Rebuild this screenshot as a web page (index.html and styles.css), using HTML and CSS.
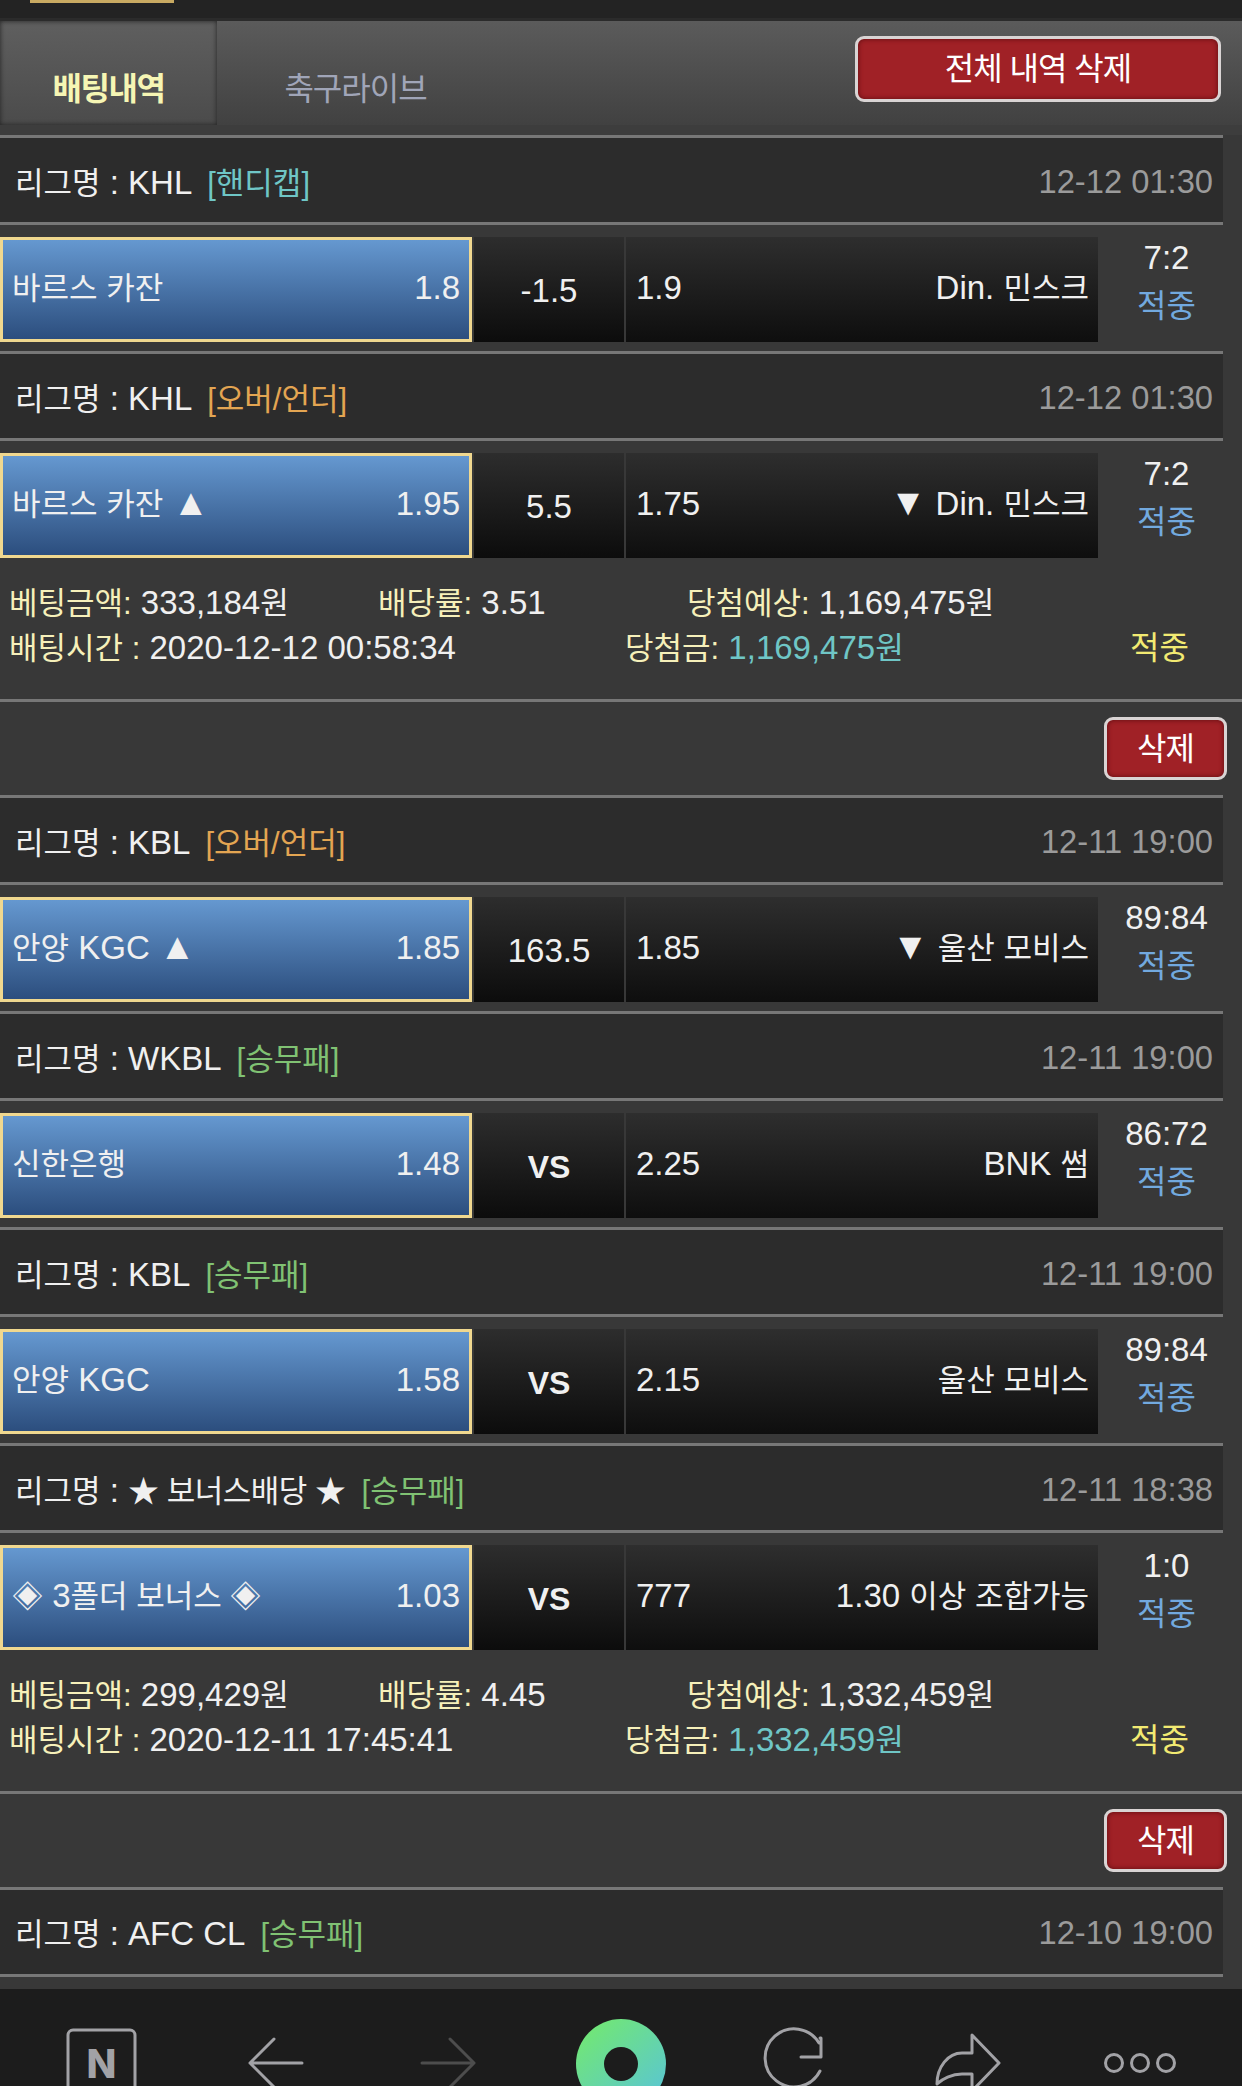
FILE: index.html
```html
<!DOCTYPE html>
<html lang="ko">
<head>
    <meta charset="UTF-8">
    <meta name="viewport" content="width=device-width, initial-scale=1.0">
    <title>배팅내역</title>
    <link rel="stylesheet" href="styles.css">
</head>
<body>
    <div class="page">
        <div class="top-strip"><div class="top-tab"></div></div>

        <div class="tabs">
            <div class="tab active">배팅내역</div>
            <div class="tab">축구라이브</div>
            <button class="btn btn-all">전체 내역 삭제</button>
        </div>
        <div class="tabs-foot"></div>

        <div class="list">
            <div class="league">
                <div><span class="ko">리그명</span> : KHL <span class="tag teal">[핸디캡]</span></div>
                <div class="date">12-12 01:30</div>
            </div>
            <div class="match">
                <div class="cell home"><span class="ko">바르스 카잔</span><span>1.8</span></div>
                <div class="cell mid">-1.5</div>
                <div class="cell away"><span>1.9</span><span>Din. <span class="ko">민스크</span></span></div>
                <div class="result">7:2<div class="hit">적중</div></div>
            </div>
            <div class="league">
                <div><span class="ko">리그명</span> : KHL <span class="tag orange">[오버/언더]</span></div>
                <div class="date">12-12 01:30</div>
            </div>
            <div class="match">
                <div class="cell home"><span><span class="ko">바르스 카잔</span> <span class="tri">▲</span></span><span>1.95</span></div>
                <div class="cell mid">5.5</div>
                <div class="cell away"><span>1.75</span><span><span class="tri">▼</span> Din. <span class="ko">민스크</span></span></div>
                <div class="result">7:2<div class="hit">적중</div></div>
            </div>
            <div class="summary">
                <div class="sum-row">
                    <div class="s1"><span class="lbl">베팅금액:</span> 333,184<span class="ko">원</span></div>
                    <div class="s2"><span class="lbl">배당률:</span> 3.51</div>
                    <div><span class="lbl">당첨예상:</span> 1,169,475<span class="ko">원</span></div>
                </div>
                <div class="sum-row">
                    <div class="s3"><span class="lbl">배팅시간 :</span> 2020-12-12 00:58:34</div>
                    <div class="s4"><span class="lbl">당첨금:</span> <span class="teal">1,169,475<span class="ko">원</span></span></div>
                    <div class="won">적중</div>
                </div>
            </div>
            <div class="del-row"><button class="btn btn-del">삭제</button></div>

            <div class="league">
                <div><span class="ko">리그명</span> : KBL <span class="tag orange">[오버/언더]</span></div>
                <div class="date">12-11 19:00</div>
            </div>
            <div class="match">
                <div class="cell home"><span><span class="ko">안양</span> KGC <span class="tri">▲</span></span><span>1.85</span></div>
                <div class="cell mid">163.5</div>
                <div class="cell away"><span>1.85</span><span><span class="tri">▼</span> <span class="ko">울산 모비스</span></span></div>
                <div class="result">89:84<div class="hit">적중</div></div>
            </div>
            <div class="league">
                <div><span class="ko">리그명</span> : WKBL <span class="tag green">[승무패]</span></div>
                <div class="date">12-11 19:00</div>
            </div>
            <div class="match">
                <div class="cell home"><span class="ko">신한은행</span><span>1.48</span></div>
                <div class="cell mid vs">VS</div>
                <div class="cell away"><span>2.25</span><span>BNK <span class="ko">썸</span></span></div>
                <div class="result">86:72<div class="hit">적중</div></div>
            </div>
            <div class="league">
                <div><span class="ko">리그명</span> : KBL <span class="tag green">[승무패]</span></div>
                <div class="date">12-11 19:00</div>
            </div>
            <div class="match">
                <div class="cell home"><span><span class="ko">안양</span> KGC</span><span>1.58</span></div>
                <div class="cell mid vs">VS</div>
                <div class="cell away"><span>2.15</span><span class="ko">울산 모비스</span></div>
                <div class="result">89:84<div class="hit">적중</div></div>
            </div>
            <div class="league">
                <div><span class="ko">리그명</span> : <span class="ko stars">★ 보너스배당 ★</span> <span class="tag green">[승무패]</span></div>
                <div class="date">12-11 18:38</div>
            </div>
            <div class="match">
                <div class="cell home"><span><span class="ko">◈</span> 3<span class="ko">폴더 보너스 ◈</span></span><span>1.03</span></div>
                <div class="cell mid vs">VS</div>
                <div class="cell away"><span>777</span><span>1.30 <span class="ko">이상 조합가능</span></span></div>
                <div class="result">1:0<div class="hit">적중</div></div>
            </div>
            <div class="summary">
                <div class="sum-row">
                    <div class="s1"><span class="lbl">베팅금액:</span> 299,429<span class="ko">원</span></div>
                    <div class="s2"><span class="lbl">배당률:</span> 4.45</div>
                    <div><span class="lbl">당첨예상:</span> 1,332,459<span class="ko">원</span></div>
                </div>
                <div class="sum-row">
                    <div class="s3"><span class="lbl">배팅시간 :</span> 2020-12-11 17:45:41</div>
                    <div class="s4"><span class="lbl">당첨금:</span> <span class="teal">1,332,459<span class="ko">원</span></span></div>
                    <div class="won">적중</div>
                </div>
            </div>
            <div class="del-row"><button class="btn btn-del">삭제</button></div>

            <div class="league league-end">
                <div><span class="ko">리그명</span> : AFC CL <span class="tag green">[승무패]</span></div>
                <div class="date">12-10 19:00</div>
            </div>
        </div>

        <nav class="nav">
            <svg class="nav-icon" viewBox="0 0 173 97">
                <rect x="53" y="41" width="67" height="70" rx="5" class="line"/>
                <text x="86.5" y="89" text-anchor="middle" class="n-text">N</text>
            </svg>
            <svg class="nav-icon" viewBox="0 0 173 97">
                <path d="M62 74H114M86 50L62 74L86 98" class="line"/>
            </svg>
            <svg class="nav-icon" viewBox="0 0 173 97">
                <path d="M61 74H113M89 50L113 74L89 98" class="line dim"/>
            </svg>
            <svg class="nav-icon" viewBox="0 0 173 97">
                <defs>
                    <linearGradient id="ring" x1="0.15" y1="0.1" x2="0.85" y2="0.9">
                        <stop offset="0" stop-color="#71e677"/>
                        <stop offset="1" stop-color="#5bc7cf"/>
                    </linearGradient>
                </defs>
                <circle cx="87" cy="75" r="45" fill="url(#ring)"/>
                <circle cx="87" cy="75" r="17" fill="#1c1c1c"/>
            </svg>
            <svg class="nav-icon" viewBox="0 0 173 97">
                <path d="M113 49H114V68H94M113 82A29 29 0 1 1 112 54" class="line"/>
            </svg>
            <svg class="nav-icon" viewBox="0 0 173 97">
                <path d="M92 46L119 74L92 102V85H82C72 85 62 90 57 95C57 78 68 64 82 64H92Z" class="line"/>
            </svg>
            <svg class="nav-icon" viewBox="0 0 173 97">
                <circle cx="61" cy="74" r="8.5" class="line"/>
                <circle cx="87" cy="74" r="8.5" class="line"/>
                <circle cx="113" cy="74" r="8.5" class="line"/>
            </svg>
        </nav>
    </div>
</body>
</html>
```

FILE: styles.css
```css
* {
    box-sizing: border-box;
}

html, body {
    margin: 0;
    padding: 0;
}

body {
    background-color: #383838;
    color: #f0f0f0;
    font-family: "Liberation Sans", "Noto Sans CJK KR", sans-serif;
    font-size: 33px;
}

.page {
    display: flex;
    flex-direction: column;
    height: 2086px;
    overflow: hidden;
}

/* hangul runs a little smaller than the latin next to them */
.ko {
    font-size: 31px;
}

.stars {
    letter-spacing: -0.5px;
}

.tri {
    font-size: 37px;
    line-height: 0;
}

.top-strip {
    height: 21px;
    flex-shrink: 0;
    background: linear-gradient(#232323 85%, #2b2b2b 85%);
}

.top-tab {
    width: 144px;
    height: 3px;
    margin-left: 30px;
    background-color: #c9aa62;
}

/* tabs */
.tabs {
    display: flex;
    align-items: flex-start;
    height: 104px;
    flex-shrink: 0;
    background: linear-gradient(#5b5b5b, #414141);
}

.tab {
    width: 217px;
    height: 104px;
    padding-top: 45px;
    padding-left: 36px;
    margin-left: 12px;
    line-height: 46px;
    font-size: 32px;
    text-align: center;
    color: #a0a5b8;
    letter-spacing: -1px;
}

.tab.active {
    margin-left: 0;
    padding-left: 0;
    color: #f6f6b4;
    font-weight: bold;
    letter-spacing: -1.5px;
    background: linear-gradient(#5f5f5f, #4b4b4b);
    box-shadow: inset 0 0 5px #222;
}

.tabs-foot {
    height: 10px;
    flex-shrink: 0;
    background-color: #3d3d3d;
}

.btn {
    font-family: inherit;
    font-size: 32px;
    color: #fff;
    background-color: #a02126;
    border: 3px solid #d9d4d4;
    border-radius: 9px;
    box-shadow: inset 0 0 5px #5c0c10;
    padding: 0 0 6px;
    letter-spacing: -1px;
}

.btn-all {
    width: 366px;
    height: 66px;
    margin: 15px 21px 0 auto;
}

.btn-del {
    width: 123px;
    height: 63px;
}

/* betting list */
.list {
    flex: 1;
    overflow: hidden;
}

.league {
    display: flex;
    justify-content: space-between;
    align-items: center;
    width: 1223px;
    height: 87px;
    padding: 5px 10px 0 15px;
    border-top: 3px solid #777;
    background-color: #2c2c2c;
    line-height: 1;
}

.league-end {
    height: 90px;
    padding-bottom: 3px;
    border-bottom: 3px solid #777;
}

.tag {
    margin-left: 7px;
    font-size: 31px;
}

.teal {
    color: #6fc6c6;
}

.orange {
    color: #e3a552;
}

.green {
    color: #80c273;
}

.date {
    font-size: 32.7px;
    color: #9b9b9b;
}

.match {
    display: grid;
    grid-template-columns: 472px 150px 472px 1fr;
    column-gap: 2px;
    width: 1223px;
    height: 129px;
    padding: 12px 0 9px;
    border-top: 3px solid #777;
}

.cell {
    display: flex;
    justify-content: space-between;
    align-items: baseline;
    height: 105px;
    padding-top: 31px;
    line-height: 40px;
}

.home {
    padding-top: 28px;
    padding-left: 9px;
    padding-right: 9px;
    border: 3px solid #f0d88f;
    background: linear-gradient(#6598d0, #2c4e7e);
}

.mid {
    justify-content: center;
    padding-top: 34px;
    background: linear-gradient(#2d2d2d, #0c0c0c);
}

.vs {
    font-size: 32px;
    font-weight: bold;
}

.away {
    padding-left: 10px;
    padding-right: 9px;
    background: linear-gradient(#2e2e2e, #0e0e0e);
}

.result {
    margin-top: -2px;
    padding-left: 10px;
    line-height: 46px;
    text-align: center;
}

.hit {
    margin-top: 2px;
    font-size: 32px;
    color: #72a9df;
}

.summary {
    height: 132px;
    padding-top: 14px;
    line-height: 44px;
}

.sum-row {
    display: flex;
}

.lbl {
    font-size: 31px;
    color: #f6f0ba;
}

.s1 {
    width: 378px;
    padding-left: 9px;
}

.s2 {
    width: 309px;
}

.s3 {
    width: 625px;
    padding-left: 9px;
}

.s4 {
    width: 505px;
}

.won {
    font-size: 32px;
    color: #f2ea72;
}

.del-row {
    display: flex;
    justify-content: flex-end;
    height: 96px;
    padding: 15px 15px 0 0;
    border-top: 3px solid #777;
}

/* bottom bar */
.nav {
    display: flex;
    height: 97px;
    flex-shrink: 0;
    padding: 0 15px;
    background-color: #1c1c1c;
}

.nav-icon {
    display: block;
    width: 173px;
    height: 97px;
}

.line {
    fill: none;
    stroke: #a2a2a6;
    stroke-width: 3;
    stroke-linecap: round;
    stroke-linejoin: round;
}

.dim {
    stroke: #4d4d4d;
}

.n-text {
    fill: #a2a2a6;
    font-family: Inter, "Liberation Sans", sans-serif;
    font-size: 39px;
    font-weight: 800;
}
```
